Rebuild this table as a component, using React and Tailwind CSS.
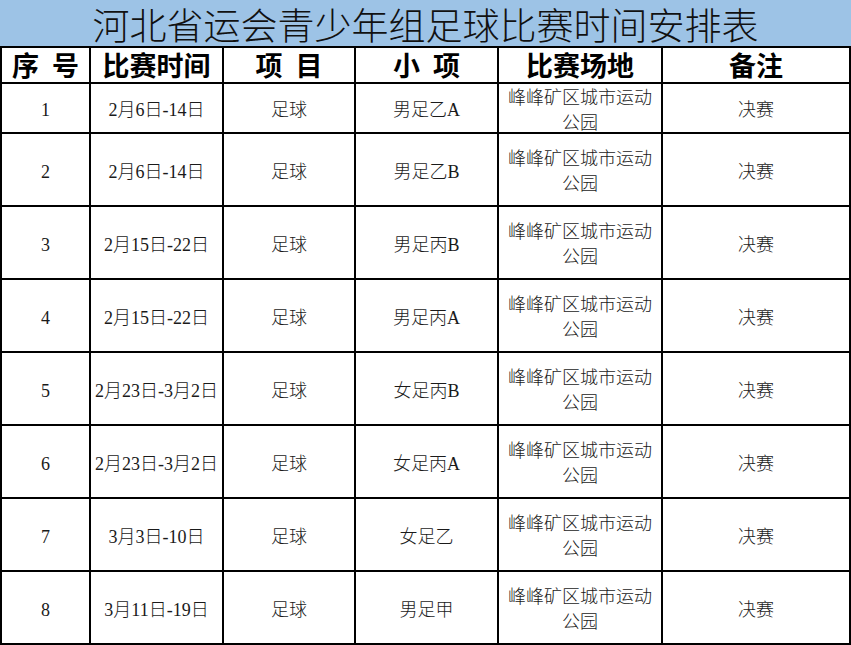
const ROWS = [
  { no: 1, date: '2月6日-14日', sub: '男足乙A' },
  { no: 2, date: '2月6日-14日', sub: '男足乙B' },
  { no: 3, date: '2月15日-22日', sub: '男足丙B' },
  { no: 4, date: '2月15日-22日', sub: '男足丙A' },
  { no: 5, date: '2月23日-3月2日', sub: '女足丙B' },
  { no: 6, date: '2月23日-3月2日', sub: '女足丙A' },
  { no: 7, date: '3月3日-10日', sub: '女足乙' },
  { no: 8, date: '3月11日-19日', sub: '男足甲' },
];

const cjk = { fontFamily: '"Liberation Serif", "Noto Sans CJK SC", serif' };

function Head({ children }) {
  return (
    <div className="bg-white flex items-center justify-center pt-[5px] text-[27px] leading-none font-bold text-black">
      {children}
    </div>
  );
}

function Cell({ children }) {
  return (
    <div className="bg-white flex items-center justify-center text-center pt-[5px] text-[18px] leading-[25px] font-light text-[#1a1a1a]">
      {children}
    </div>
  );
}

const Gap = () => <span className="inline-block w-[13px]" />;

export default function App() {
  return (
    <div className="w-[851px] h-[645px] bg-white" style={cjk}>
      <div className="h-[46px] bg-[#9dc3e6] text-center pt-[9px] text-[37px] leading-[37px] text-[#111] font-light whitespace-nowrap">
        河北省运会青少年组足球比赛时间安排表
      </div>
      <div className="grid grid-cols-[87px_131px_130px_141px_162px_186px] grid-rows-[34px_48px_repeat(7,71px)] gap-[2px] p-[2px] bg-black">
        <Head>序<Gap />号</Head>
        <Head>比赛时间</Head>
        <Head>项<Gap />目</Head>
        <Head>小<Gap />项</Head>
        <Head>比赛场地</Head>
        <Head>备注</Head>
        {ROWS.map(r => (
          <div key={r.no} className="contents">
            <Cell>{r.no}</Cell>
            <Cell><span className="whitespace-nowrap">{r.date}</span></Cell>
            <Cell>足球</Cell>
            <Cell>{r.sub}</Cell>
            <Cell>
              <div className="flex flex-col items-center">
                <span className="whitespace-nowrap">峰峰矿区城市运动</span>
                <span>公园</span>
              </div>
            </Cell>
            <Cell>决赛</Cell>
          </div>
        ))}
      </div>
    </div>
  );
}
